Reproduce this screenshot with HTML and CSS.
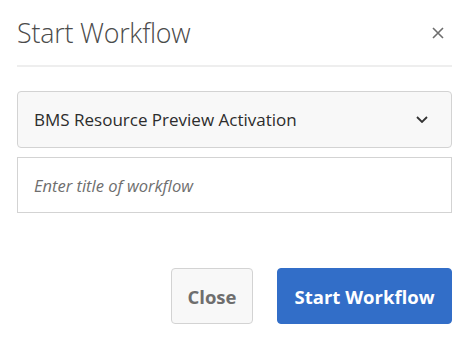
FILE: index.html
```html
<!DOCTYPE html>
<html lang="en">
<head>
  <meta charset="UTF-8">
  <meta name="viewport" content="width=device-width, initial-scale=1.0">
  <title>Start Workflow</title>
  <link rel="stylesheet" href="styles.css">
</head>
<body>

  <div class="dialog">
    <div class="header">
      <h1>Start Workflow</h1>
      <button class="close-x" aria-label="Close">
        <svg width="12" height="12" viewBox="0 0 12 12">
          <path d="M1 1 L11 11 M11 1 L1 11" stroke="#6e6e6e" stroke-width="1.6" fill="none"/>
        </svg>
      </button>
    </div>

    <div class="body">
      <div class="select">
        <span>BMS Resource Preview Activation</span>
        <svg width="12" height="7" viewBox="0 0 12 7">
          <path d="M1 1 L6 6 L11 1" stroke="#333" stroke-width="1.8" fill="none"/>
        </svg>
      </div>
      <input type="text" class="title-input" placeholder="Enter title of workflow">
    </div>

    <div class="footer">
      <button class="btn btn-close">Close</button>
      <button class="btn btn-start">Start Workflow</button>
    </div>
  </div>

</body>
</html>
```

FILE: styles.css
```css
body {
  font-family: "Open Sans", "Noto Sans", sans-serif;
  background-color: #fff;
  margin: 0;
  padding: 0;
}

.dialog {
  width: 435px;
  padding: 0 14px 0 17px;
}

.header {
  display: flex;
  align-items: center;
  justify-content: space-between;
  height: 65px;
  border-bottom: 2px solid #eeeeee;
}

h1 {
  margin: 0;
  font-size: 26.8px;
  font-weight: 300;
  color: #4b4b4b;
  letter-spacing: -0.2px;
}

.close-x {
  border: none;
  background: none;
  padding: 0;
  margin-right: 8px;
  width: 12px;
  height: 12px;
  display: flex;
  cursor: pointer;
}

.body {
  padding-top: 24px;
  display: flex;
  flex-direction: column;
  gap: 9px;
}

.select {
  height: 57px;
  box-sizing: border-box;
  border: 1px solid #d3d3d3;
  border-radius: 4px;
  background-color: #f8f8f8;
  display: flex;
  align-items: center;
  justify-content: space-between;
  padding: 0 23px 0 16px;
  font-size: 17px;
  color: #2c2c2c;
}

.title-input {
  height: 56px;
  box-sizing: border-box;
  border: 1px solid #d3d3d3;
  border-radius: 0;
  padding: 0 16px;
  font-family: inherit;
  font-size: 16.5px;
  outline: none;
}

.title-input::placeholder {
  color: #6e6e6e;
  font-style: italic;
}

.footer {
  display: flex;
  justify-content: flex-end;
  gap: 24px;
  padding-top: 55px;
}

.btn {
  height: 56px;
  border-radius: 4px;
  font-family: inherit;
  font-size: 18.5px;
  font-weight: 700;
  cursor: pointer;
}

.btn-close {
  width: 82px;
  background-color: #f8f8f8;
  border: 1px solid #d3d3d3;
  color: #6e6e6e;
}

.btn-start {
  width: 175px;
  background-color: #326ec8;
  border: 1px solid #326ec8;
  color: #fff;
}

.btn-start:hover {
  background-color: #2a5fb0;
}
```
